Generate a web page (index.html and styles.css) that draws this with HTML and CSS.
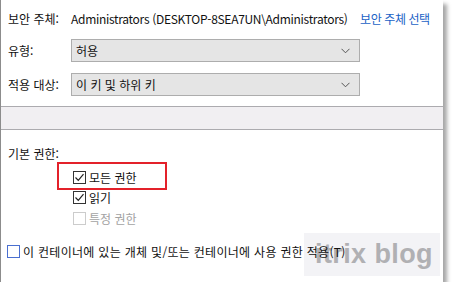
FILE: index.html
```html
<!DOCTYPE html>
<html lang="ko">
<head>
<meta charset="UTF-8">
<title>권한 항목</title>
<link rel="stylesheet" href="styles.css">
</head>
<body>
<div class="window">
  <div class="row principal">
    <span class="label">보안 주체:</span>
    <span class="value">Administrators (DESKTOP-8SEA7UN\Administrators)</span>
    <a class="link">보안 주체 선택</a>
  </div>
  <div class="row field">
    <span class="label">유형:</span>
    <div class="select">
      <span>허용</span>
      <svg class="chev" width="9" height="6" viewBox="0 0 9 6"><path d="M0.5 0.8 L4.5 4.8 L8.5 0.8" fill="none" stroke="#555" stroke-width="1"/></svg>
    </div>
  </div>
  <div class="row field">
    <span class="label">적용 대상:</span>
    <div class="select">
      <span>이 키 및 하위 키</span>
      <svg class="chev" width="9" height="6" viewBox="0 0 9 6"><path d="M0.5 0.8 L4.5 4.8 L8.5 0.8" fill="none" stroke="#555" stroke-width="1"/></svg>
    </div>
  </div>
  <div class="band"></div>
  <div class="perms">
    <div class="perms-title">기본 권한:</div>
    <label class="check highlight"><span class="box on"><svg width="11" height="11" viewBox="0 0 11 11"><path d="M1.5 5.5 L4.3 8.3 L9.5 2.2" fill="none" stroke="#222" stroke-width="1.2"/></svg></span>모든 권한</label>
    <label class="check"><span class="box on"><svg width="11" height="11" viewBox="0 0 11 11"><path d="M1.5 5.5 L4.3 8.3 L9.5 2.2" fill="none" stroke="#222" stroke-width="1.2"/></svg></span>읽기</label>
    <label class="check disabled"><span class="box"></span>특정 권한</label>
  </div>
  <label class="check apply"><span class="box focus"></span><span class="apply-text">이 컨테이너에 있는 개체 및/또는 컨테이너에 사용 권한 적용(T)</span></label>
  <div class="watermark">itrix blog</div>
</div>
</body>
</html>
```

FILE: styles.css
```css
body {
  margin: 0;
  background-color: #fff;
  font-family: "Noto Sans CJK KR", "Noto Sans", sans-serif;
  font-size: 12px;
  color: #111;
}

.window {
  position: relative;
  width: 442px;
  height: 282px;
  border-left: 1px solid #8c8c8c;
  background-color: #fff;
  box-shadow: 4px 4px 4px rgba(0, 0, 0, 0.35);
  overflow: hidden;
}

.row {
  display: flex;
  align-items: center;
  white-space: nowrap;
}

.label {
  width: 63px;
  padding-left: 7px;
  flex-shrink: 0;
}

.principal {
  height: 22px;
  margin-top: 7px;
}

.value {
  width: 289px;
  flex-shrink: 0;
  letter-spacing: -0.3px;
}

.link {
  color: #1a62c6;
  letter-spacing: -0.4px;
}

.field {
  margin-top: 10px;
}

.field + .field {
  margin-top: 11px;
}

.select {
  width: 274px;
  height: 21px;
  border: 1px solid #adadad;
  background-color: #e5e5e5;
  display: flex;
  align-items: center;
  justify-content: space-between;
  padding: 0 9px 0 4px;
}

.band {
  margin-top: 10px;
  height: 22px;
  border-top: 1px solid #acabaf;
  border-bottom: 1px solid #acabaf;
  background-color: #f1eff2;
}

.perms {
  padding-top: 14px;
}

.perms-title {
  padding-left: 7px;
  height: 20px;
  line-height: 20px;
}

.check {
  position: relative;
  display: flex;
  align-items: center;
  height: 20.5px;
  padding-left: 72px;
  white-space: nowrap;
}

.box {
  width: 11px;
  height: 11px;
  border: 1px solid #333;
  margin-right: 3px;
  display: flex;
  align-items: center;
  justify-content: center;
  background-color: #fff;
}

.highlight {
  margin-top: 3px;
}

.highlight::before {
  content: "";
  position: absolute;
  left: 56px;
  top: -5px;
  width: 106px;
  height: 24px;
  border: 2px solid #e3212a;
}

.disabled {
  color: #a3a3a3;
}

.disabled .box {
  border-color: #cccccc;
}

.apply {
  margin-top: 13px;
  padding-left: 6px;
}

.box.focus {
  border-color: #4a6fd0;
}

.apply-text {
  position: relative;
  z-index: 2;
  letter-spacing: 0.3px;
}

.watermark {
  position: absolute;
  left: 303px;
  top: 233px;
  width: 136px;
  height: 43px;
  background-color: rgba(232, 232, 238, 0.5);
  color: #b0b0b3;
  font-family: "Liberation Sans", Arial, sans-serif;
  font-weight: bold;
  font-size: 27px;
  letter-spacing: 0.4px;
  line-height: 43px;
  padding-left: 11px;
  box-sizing: border-box;
  z-index: 1;
}
```
